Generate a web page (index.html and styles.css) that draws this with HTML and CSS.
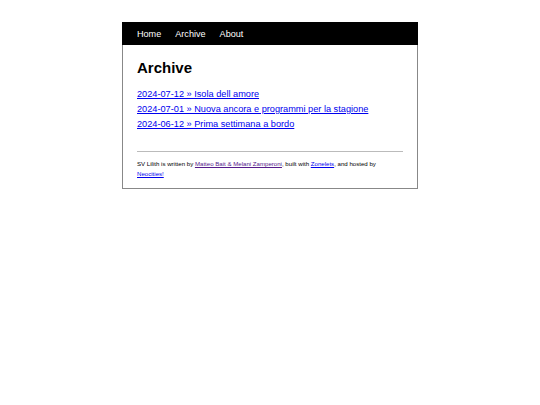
FILE: index.html
```html
<!DOCTYPE html>
<html lang="it">
<head>
<meta charset="utf-8">
<title>Archive</title>
<link rel="stylesheet" href="styles.css">
</head>
<body>
<div class="container">
  <nav class="nav">
    <a href="#">Home</a>
    <a href="#">Archive</a>
    <a href="#">About</a>
  </nav>
  <main class="content">
    <h1 class="title">Archive</h1>
    <ul class="posts">
      <li><a href="#">2024-07-12 » Isola dell amore</a></li>
      <li><a href="#">2024-07-01 » Nuova ancora e programmi per la stagione</a></li>
      <li><a href="#">2024-06-12 » Prima settimana a bordo</a></li>
    </ul>
    <footer class="footer">
      <hr class="rule">
      <p>SV Lilith is written by <a class="visited" href="#">Matteo Bait &amp; Melani Zamperoni</a>, built with <a href="#">Zonelets</a>, and hosted by <a href="#">Neocities!</a></p>
    </footer>
  </main>
</div>
</body>
</html>
```
FILE: styles.css
```css
html, body {
  margin: 0;
  padding: 0;
  background: #fff;
}
body {
  font-family: "Liberation Sans", Arial, sans-serif;
  color: #000;
  padding-top: 22px;
}
.container {
  width: 294px;
  margin: 0 auto;
  border: 1px solid #888;
  border-top: none;
}
.nav {
  background: #000;
  height: 23px;
  display: flex;
  align-items: center;
  gap: 14px;
  margin: 0 -1px;
  padding: 0 14px 0 15px;
}
.nav a {
  color: #fff;
  text-decoration: none;
  font-size: 9.1px;
}
.content {
  padding: 0 14px;
}
.title {
  font-size: 15px;
  font-weight: bold;
  margin: 14px 0 0 0;
  line-height: 18px;
}
.posts {
  list-style: none;
  margin: 10px 0 0 0;
  padding: 0;
  font-size: 9.2px;
  line-height: 15px;
}
.posts a {
  color: #0000ee;
}
.footer {
  margin-top: 19px;
  padding-bottom: 9px;
}
.rule {
  border: none;
  border-top: 1px solid #bbb;
  margin: 0;
  height: 0;
}
.footer p {
  margin: 7px 0 0 0;
  font-size: 6.1px;
  line-height: 10px;
}
.footer a {
  color: #0000ee;
}
.footer a.visited {
  color: #551a8b;
}
```
